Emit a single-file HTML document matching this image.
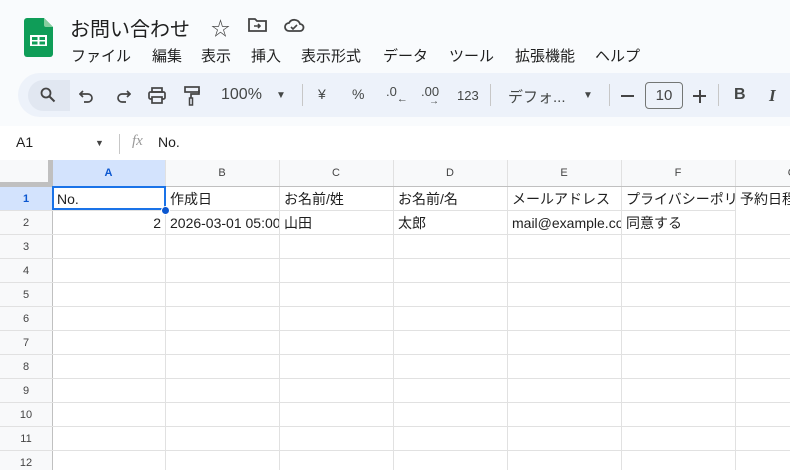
<!DOCTYPE html>
<html><head><meta charset="utf-8"><style>
*{margin:0;padding:0;box-sizing:border-box}
body{width:790px;height:470px;overflow:hidden;background:#f9fbfd;font-family:"Liberation Sans","Noto Sans CJK JP",sans-serif;color:#1f1f1f;position:relative}
.a{position:absolute;white-space:nowrap}
.m{position:absolute;top:45px;font-size:15px}
.tb{position:absolute;left:18px;top:73px;width:800px;height:44px;background:#edf2fa;border-radius:22px}
.ti{position:absolute;top:86px;font-size:15px;color:#444746}
.sep{position:absolute;top:84px;width:1px;height:22px;background:#c7c7c7}
.grid{position:absolute;left:0;top:160px;width:790px;height:310px;background:#fff;overflow:hidden}
.cell{position:absolute;font-size:14px;overflow:hidden;white-space:nowrap;line-height:24px;padding-left:4px}
.hl{position:absolute;background:#e1e1e1}
.ch{position:absolute;top:0;height:26px;line-height:26px;font-size:11px;color:#444;text-align:center}
.rh{position:absolute;left:0;width:52px;height:24px;line-height:24px;font-size:11px;color:#444;text-align:center}
</style></head><body>
<svg class="a" style="left:24px;top:18px" width="29" height="39" viewBox="0 0 29 39"><path d="M3 0h17l9 9v27a3 3 0 0 1-3 3H3a3 3 0 0 1-3-3V3a3 3 0 0 1 3-3z" fill="#0f9d58"/><path d="M20 0l9 9h-7a2 2 0 0 1-2-2z" fill="#87ce9f"/><rect x="6" y="17" width="17" height="11" fill="#fff"/><rect x="8" y="19" width="5.5" height="3" fill="#0f9d58"/><rect x="15.5" y="19" width="5.5" height="3" fill="#0f9d58"/><rect x="8" y="23.5" width="5.5" height="3" fill="#0f9d58"/><rect x="15.5" y="23.5" width="5.5" height="3" fill="#0f9d58"/></svg>
<div class="a" style="left:70px;top:13px;font-size:20px">お問い合わせ</div>
<div class="a" style="left:211px;top:14px;font-size:19px;color:#444">☆</div>
<svg class="a" style="left:248px;top:17px" width="20" height="16" viewBox="0 0 20 16"><path d="M1 2h6l2 2h9v10H1z" fill="none" stroke="#444" stroke-width="1.8"/><path d="M6 9h6M10 7l2 2-2 2" fill="none" stroke="#444" stroke-width="1.6"/></svg>
<svg class="a" style="left:283px;top:17px" width="22" height="16" viewBox="0 0 22 16"><path d="M6 14a4 4 0 0 1 0-8 6 6 0 0 1 11 1 3.5 3.5 0 0 1 0 7z" fill="none" stroke="#444" stroke-width="1.8"/><path d="M8 10l2 2 4-4" fill="none" stroke="#444" stroke-width="1.6"/></svg>
<div class="m" style="left:71px">ファイル</div>
<div class="m" style="left:152px">編集</div>
<div class="m" style="left:201px">表示</div>
<div class="m" style="left:251px">挿入</div>
<div class="m" style="left:301px">表示形式</div>
<div class="m" style="left:383px">データ</div>
<div class="m" style="left:449px">ツール</div>
<div class="m" style="left:515px">拡張機能</div>
<div class="m" style="left:595px">ヘルプ</div>
<div class="tb"></div>
<div class="a" style="left:28px;top:80px;width:42px;height:31px;background:#e1e7f1;border-radius:16px 0 0 16px"></div>
<svg class="a" style="left:40px;top:87px" width="16" height="16" viewBox="0 0 16 16"><circle cx="6" cy="6" r="4.5" fill="none" stroke="#444" stroke-width="1.8"/><path d="M9.5 9.5l5 5" stroke="#444" stroke-width="2"/></svg>
<svg class="a" style="left:79px;top:89px" width="16" height="14" viewBox="0 0 16 14"><path d="M4 2L1 5l3 3M1 5h8a4 4 0 0 1 0 8H5" fill="none" stroke="#444" stroke-width="1.7"/></svg>
<svg class="a" style="left:115px;top:89px" width="16" height="14" viewBox="0 0 16 14"><path d="M12 2l3 3-3 3M15 5H7a4 4 0 0 0 0 8h4" fill="none" stroke="#444" stroke-width="1.7"/></svg>
<svg class="a" style="left:148px;top:87px" width="18" height="17" viewBox="0 0 18 17"><rect x="4" y="1" width="10" height="4" fill="none" stroke="#444" stroke-width="1.7"/><rect x="1" y="5" width="16" height="7" rx="1.5" fill="none" stroke="#444" stroke-width="1.7"/><rect x="4" y="10" width="10" height="6" fill="#edf2fa" stroke="#444" stroke-width="1.7"/></svg>
<svg class="a" style="left:184px;top:86px" width="16" height="20" viewBox="0 0 16 20"><rect x="1" y="1" width="14" height="5" fill="none" stroke="#444" stroke-width="1.7"/><path d="M15 4v4H7v4" fill="none" stroke="#444" stroke-width="1.7"/><rect x="5.5" y="12" width="3" height="7" fill="none" stroke="#444" stroke-width="1.5"/></svg>
<div class="ti" style="left:221px;font-size:16px">100%</div>
<div class="ti" style="left:276px;font-size:10px;top:90px">▼</div>
<div class="sep" style="left:302px"></div>
<div class="ti" style="left:318px;font-size:14px">¥</div>
<div class="ti" style="left:352px;font-size:14px">%</div>
<div class="ti" style="left:386px;font-size:13px;top:84px">.0<span style="font-size:11px;position:relative;top:6px">←</span></div>
<div class="ti" style="left:421px;font-size:13px;top:84px">.00<span style="font-size:10px;position:absolute;left:8px;top:12px">→</span></div>
<div class="ti" style="left:457px;font-size:13px;top:88px">123</div>
<div class="sep" style="left:490px"></div>
<div class="ti" style="left:508px">デフォ...</div>
<div class="ti" style="left:583px;font-size:10px;top:90px">▼</div>
<div class="sep" style="left:609px"></div>
<div class="a" style="left:621px;top:95px;width:13px;height:2px;background:#444"></div>
<div class="a" style="left:645px;top:82px;width:38px;height:27px;border:1px solid #747775;border-radius:4px;text-align:center;line-height:25px;font-size:15px;color:#444">10</div>
<div class="a" style="left:693px;top:95px;width:13px;height:2px;background:#444"></div>
<div class="a" style="left:698.5px;top:89.5px;width:2px;height:13px;background:#444"></div>
<div class="sep" style="left:718px"></div>
<div class="ti" style="left:734px;font-weight:bold;font-size:16px">B</div>
<div class="ti" style="left:769px;font-weight:bold;font-style:italic;font-family:'Liberation Serif',serif;font-size:17px">I</div>
<div class="a" style="left:0;top:126px;width:790px;height:34px;background:#fff"></div>
<div class="a" style="left:16px;top:134px;font-size:14px">A1</div>
<div class="a" style="left:95px;top:138px;font-size:9px;color:#444">▼</div>
<div class="a" style="left:119px;top:134px;width:1px;height:20px;background:#c7c7c7"></div>
<div class="a" style="left:132px;top:133px;font-size:15px;font-style:italic;color:#999;font-family:'Liberation Serif',serif">fx</div>
<div class="a" style="left:158px;top:134px;font-size:14px">No.</div>
<div class="grid">
<div class="hl" style="left:0;top:0;width:790px;height:26px;background:#f8f9fa"></div>
<div class="hl" style="left:0;top:0;width:52px;height:310px;background:#f8f9fa"></div>
<div class="hl" style="left:52px;top:0;width:113px;height:26px;background:#d3e3fd"></div>
<div class="hl" style="left:0;top:26px;width:52px;height:24px;background:#d3e3fd"></div>
<div class="hl" style="left:0;top:0;width:52px;height:26px;background:#f8f9fa;border-right:4px solid #c0c0c0;border-bottom:4px solid #c0c0c0"></div>
<div class="hl" style="left:52px;top:0;width:1px;height:310px;background:#c0c0c0"></div>
<div class="hl" style="left:165px;top:0;width:1px;height:310px"></div>
<div class="hl" style="left:279px;top:0;width:1px;height:310px"></div>
<div class="hl" style="left:393px;top:0;width:1px;height:310px"></div>
<div class="hl" style="left:507px;top:0;width:1px;height:310px"></div>
<div class="hl" style="left:621px;top:0;width:1px;height:310px"></div>
<div class="hl" style="left:735px;top:0;width:1px;height:310px"></div>
<div class="hl" style="left:0;top:26px;width:790px;height:1px;background:#c0c0c0"></div>
<div class="hl" style="left:0;top:50px;width:790px;height:1px"></div>
<div class="hl" style="left:0;top:74px;width:790px;height:1px"></div>
<div class="hl" style="left:0;top:98px;width:790px;height:1px"></div>
<div class="hl" style="left:0;top:122px;width:790px;height:1px"></div>
<div class="hl" style="left:0;top:146px;width:790px;height:1px"></div>
<div class="hl" style="left:0;top:170px;width:790px;height:1px"></div>
<div class="hl" style="left:0;top:194px;width:790px;height:1px"></div>
<div class="hl" style="left:0;top:218px;width:790px;height:1px"></div>
<div class="hl" style="left:0;top:242px;width:790px;height:1px"></div>
<div class="hl" style="left:0;top:266px;width:790px;height:1px"></div>
<div class="hl" style="left:0;top:290px;width:790px;height:1px"></div>
<div class="ch" style="left:52px;width:113px;font-weight:bold;color:#0b57d0">A</div>
<div class="ch" style="left:165px;width:114px">B</div>
<div class="ch" style="left:279px;width:114px">C</div>
<div class="ch" style="left:393px;width:114px">D</div>
<div class="ch" style="left:507px;width:114px">E</div>
<div class="ch" style="left:621px;width:114px">F</div>
<div class="ch" style="left:735px;width:114px">G</div>
<div class="rh" style="top:27px;font-weight:bold;color:#0b57d0">1</div>
<div class="rh" style="top:51px">2</div><div class="rh" style="top:75px">3</div><div class="rh" style="top:99px">4</div><div class="rh" style="top:123px">5</div><div class="rh" style="top:147px">6</div><div class="rh" style="top:171px">7</div><div class="rh" style="top:195px">8</div><div class="rh" style="top:219px">9</div><div class="rh" style="top:243px">10</div><div class="rh" style="top:267px">11</div><div class="rh" style="top:291px">12</div>
<div class="cell" style="left:53px;top:27px;width:112px">No.</div>
<div class="cell" style="left:166px;top:27px;width:113px">作成日</div>
<div class="cell" style="left:280px;top:27px;width:113px">お名前/姓</div>
<div class="cell" style="left:394px;top:27px;width:113px">お名前/名</div>
<div class="cell" style="left:508px;top:27px;width:113px">メールアドレス</div>
<div class="cell" style="left:622px;top:27px;width:113px">プライバシーポリ</div>
<div class="cell" style="left:736px;top:27px;width:60px;background:#fff">予約日程</div>
<div class="cell" style="left:53px;top:51px;width:110px;text-align:right;padding-right:2px">2</div>
<div class="cell" style="left:166px;top:51px;width:113px">2026-03-01 05:00</div>
<div class="cell" style="left:280px;top:51px;width:113px">山田</div>
<div class="cell" style="left:394px;top:51px;width:113px">太郎</div>
<div class="cell" style="left:508px;top:51px;width:113px">mail@example.com</div>
<div class="cell" style="left:622px;top:51px;width:113px">同意する</div>
<div class="hl" style="left:52px;top:26px;width:114px;height:24px;background:none;border:2px solid #1a73e8"></div>
<div class="hl" style="left:161px;top:46px;width:9px;height:9px;border-radius:50%;background:#0b57d0;border:1px solid #fff"></div>
</div>
</body></html>
